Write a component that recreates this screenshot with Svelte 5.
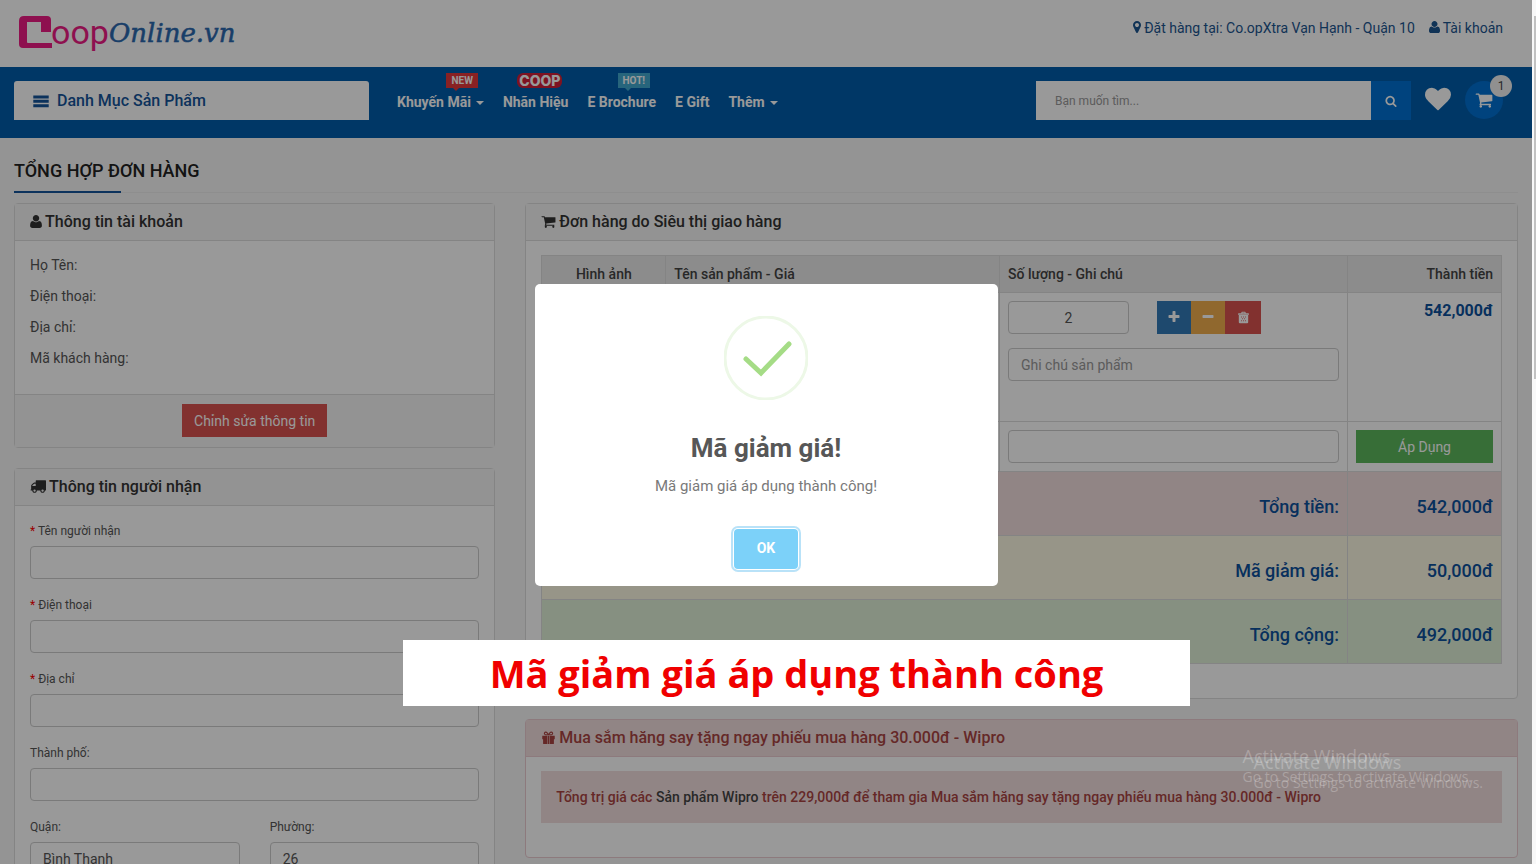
<script>
  const icons = {
    marker: "M1152 640q0-106-75-181t-181-75-181 75-75 181 75 181 181 75 181-75 75-181zm256 0q0 109-33 179l-364 774q-16 33-47.5 52t-67.5 19-67.5-19-46.5-52l-365-774q-33-70-33-179 0-212 150-362t362-150 362 150 150 362z",
    user: "M1600 1405q0 120-73 189.5t-194 69.5h-874q-121 0-194-69.5t-73-189.5q0-53 3.5-103.5t14-109 26.5-108.5 43-97.5 62-81 85.5-53.5 111.5-20q9 0 42 21.5t74.5 48 108 48 133.5 21.5 133.5-21.5 108-48 74.5-48 42-21.5q61 0 111.5 20t85.5 53.5 62 81 43 97.5 26.5 108.5 14 109 3.5 103.5zm-320-893q0 159-112.5 271.5t-271.5 112.5-271.5-112.5-112.5-271.5 112.5-271.5 271.5-112.5 271.5 112.5 112.5 271.5z",
    bars: "M128 340h1536v300H128zM128 780h1536v300H128zM128 1220h1536v300H128z",
    search: "M1216 832q0-185-131.5-316.5t-316.5-131.5-316.5 131.5-131.5 316.5 131.5 316.5 316.5 131.5 316.5-131.5 131.5-316.5zm512 832q0 52-38 90t-90 38q-54 0-90-38l-343-342q-179 124-399 124-143 0-273.5-55.5t-225-150-150-225-55.5-273.5 55.5-273.5 150-225 225-150 273.5-55.5 273.5 55.5 225 150 150 225 55.5 273.5q0 220-124 399l343 343q37 37 37 90z",
    heart: "M896 1664q-26 0-44-18l-624-602q-10-8-27.5-26t-55.5-65.5-68-97.5-53.5-121-23.5-138q0-220 127-344t351-124q62 0 126.5 21.5t120 58 95.5 68.5 76 68q36-36 76-68t95.5-68.5 120-58 126.5-21.5q224 0 351 124t127 344q0 221-229 450l-623 600q-18 18-44 18z",
    cart: "M704 1536q0 52-38 90t-90 38-90-38-38-90 38-90 90-38 90 38 38 90zm896 0q0 52-38 90t-90 38-90-38-38-90 38-90 90-38 90 38 38 90zm128-1088v512q0 24-16.5 42.5t-40.5 21.5l-1044 122q13 60 13 70 0 16-24 64h920q26 0 45 19t19 45-19 45-45 19h-1024q-26 0-45-19t-19-45q0-11 8-31.5t16-36 21.5-40 15.5-29.5l-177-823h-204q-26 0-45-19t-19-45 19-45 45-19h256q16 0 28.5 6.5t19.5 15.5 13 24.5 8 26 5.5 29.5 4.5 26h1201q26 0 45 19t19 45z",
    truck: "M640 1408q0-52-38-90t-90-38-90 38-38 90 38 90 90 38 90-38 38-90zm-384-512h384v-256h-158q-13 0-22 9l-195 195q-9 9-9 22v30zm1280 512q0-52-38-90t-90-38-90 38-38 90 38 90 90 38 90-38 38-90zm256-1088v1024q0 15-4 26.5t-13.5 18.5-16.5 11.5-23.5 6-22.5 2-25.5 0-22.5-.5q0 106-75 181t-181 75-181-75-75-181h-384q0 106-75 181t-181 75-181-75-75-181h-64q-3 0-22.5.5t-25.5 0-22.5-2-23.5-6-16.5-11.5-13.5-18.5-4-26.5q0-26 19-45t45-19v-320q0-8-.5-35t0-38 2.5-34.5 6.5-37 14-30.5 22.5-30l198-198q19-19 50.5-32t58.5-13h160v-192q0-26 19-45t45-19h1024q26 0 45 19t19 45z",
    gift: "M750 700H150v400h100v500q0 64 64 64h436zM1042 700h600v400h-100v500q0 64-64 64h-436zM810 700h172v964H810zM896 640Q780 640 560 640A232 232 0 1 1 760 270L896 440 1032 270A232 232 0 1 1 1232 640zM560 340a90 90 0 0 0 0 180h220L650 370q-40-30-90-30zM1232 340q-50 0-90 30L1012 520h220a90 90 0 0 0 0-180z",
    plus: "M1600 736v192q0 40-28 68t-68 28h-416v416q0 40-28 68t-68 28h-192q-40 0-68-28t-28-68v-416h-416q-40 0-68-28t-28-68v-192q0-40 28-68t68-28h416v-416q0-40 28-68t68-28h192q40 0 68 28t28 68v416h416q40 0 68 28t28 68z",
    minus: "M1600 736v192q0 40-28 68t-68 28h-1216q-40 0-68-28t-28-68v-192q0-40 28-68t68-28h1216q40 0 68 28t28 68z",
    trash: "M600 300V200q0-100 100-100h392q100 0 100 100v100h360q100 0 100 100v100H140V400q0-100 100-100zM740 300h312v-70H740zM250 560h1292v980q0 140-140 140H390q-140 0-140-140zM560 760v140h110V760zM841 760v140h110V760zM1122 760v140h110V760zM700 1010v140h110v-140zM981 1010v140h110v-140zM560 1260v140h110v-140zM841 1260v140h110v-140zM1122 1260v140h110v-140z",
  };

  // narrow glyphs drop the empty space at their sides
  const boxes = {
    marker: { x: 384, width: 1024 },
    user: { x: 192, width: 1408 },
  };

  const menu = [
    { name: "Khuyến Mãi", tag: "NEW", type: "new", caret: true },
    { name: "Nhãn Hiệu", tag: "COOP", type: "coop" },
    { name: "E Brochure", tag: "HOT!", type: "hot" },
    { name: "E Gift" },
    { name: "Thêm", caret: true },
  ];

  const account = ["Họ Tên:", "Điện thoại:", "Địa chỉ:", "Mã khách hàng:"];

  const fields = [
    { id: "name", label: "Tên người nhận", required: true },
    { id: "phone", label: "Điện thoại", required: true },
    { id: "address", label: "Địa chỉ", required: true },
    { id: "city", label: "Thành phố:" },
  ];

  const totals = [
    { label: "Tổng tiền:", value: "542,000đ", type: "danger" },
    { label: "Mã giảm giá:", value: "50,000đ", type: "warning" },
    { label: "Tổng cộng:", value: "492,000đ", type: "success" },
  ];

  let quantity = $state(2);
  let isShow = $state(true);
</script>

{#snippet icon(name, size)}
  {@const box = boxes[name] ?? { x: 0, width: 1792 }}
  <svg
    class="icon"
    width={Math.round((size * box.width) / 1792)}
    height={size}
    viewBox="{box.x} 0 {box.width} 1792"
    aria-hidden="true"
  >
    <path fill-rule="evenodd" d={icons[name]} />
  </svg>
{/snippet}

<div class="window">
  <div class="page">
    <header class="top">
      <a class="logo" href="/" aria-label="Coop Online">
        <svg width="224" height="48" viewBox="0 0 224 48">
          <path
            fill="#ed1c84"
            fill-rule="evenodd"
            d="M6 4H29Q33 4 33 8V20H23V10H9V30Q9 31 10 31H34V36H5Q1 36 1 32V9Q1 4 6 4Z"
          />
          <text class="oop" x="33" y="32">oop</text>
          <text class="online" x="91" y="30">Online.vn</text>
        </svg>
      </a>
      <div class="links">
        <a href="#store">{@render icon("marker", 14)}Đặt hàng tại: Co.opXtra Vạn Hạnh - Quận 10</a>
        <a href="#account">{@render icon("user", 14)}Tài khoản</a>
      </div>
    </header>

    <nav class="bar">
      <button class="category">{@render icon("bars", 18)} Danh Mục Sản Phẩm</button>
      <ul class="menu">
        {#each menu as item}
          <li>
            {#if item.tag}<span class="tag {item.type}">{item.tag}</span>{/if}
            <a href="#menu">{item.name}{#if item.caret}<i class="caret"></i>{/if}</a>
          </li>
        {/each}
      </ul>
      <form class="search">
        <input type="text" placeholder="Bạn muốn tìm..." aria-label="Tìm kiếm" />
        <button type="button" aria-label="Tìm">{@render icon("search", 12)}</button>
      </form>
      <a class="heart" href="#wishlist" aria-label="Yêu thích">{@render icon("heart", 26)}</a>
      <a class="cart" href="#cart" aria-label="Giỏ hàng">
        {@render icon("cart", 18)}
        <span class="count">1</span>
      </a>
    </nav>

    <main>
      <h1>TỔNG HỢP ĐƠN HÀNG</h1>
      <div class="row">
        <div class="left">
          <section class="panel">
            <h2>{@render icon("user", 15)}Thông tin tài khoản</h2>
            <div class="body account">
              {#each account as line}
                <p>{line}</p>
              {/each}
            </div>
            <div class="footer">
              <button class="btn red">Chỉnh sửa thông tin</button>
            </div>
          </section>

          <section class="panel">
            <h2>{@render icon("truck", 16)}Thông tin người nhận</h2>
            <div class="body receiver">
              {#each fields as field}
                <div class="group">
                  <label for={field.id}>{#if field.required}<b>*</b>{/if} {field.label}</label>
                  <input class="control" id={field.id} type="text" />
                </div>
              {/each}
              <div class="pair">
                <div class="group">
                  <label for="district">Quận:</label>
                  <input class="control" id="district" type="text" value="Bình Thạnh" />
                </div>
                <div class="group">
                  <label for="ward">Phường:</label>
                  <input class="control" id="ward" type="text" value="26" />
                </div>
              </div>
            </div>
          </section>
        </div>

        <div class="right">
          <section class="panel">
            <h2>{@render icon("cart", 15)}Đơn hàng do Siêu thị giao hàng</h2>
            <div class="body order">
              <table>
                <thead>
                  <tr>
                    <th class="image">Hình ảnh</th>
                    <th>Tên sản phẩm - Giá</th>
                    <th class="note">Số lượng - Ghi chú</th>
                    <th class="money">Thành tiền</th>
                  </tr>
                </thead>
                <tbody>
                  <tr class="product">
                    <td></td>
                    <td></td>
                    <td>
                      <div class="quantity">
                        <input class="control" type="text" aria-label="Số lượng" bind:value={quantity} />
                        <div class="actions">
                          <button class="plus" aria-label="Thêm" onclick={() => quantity++}>{@render icon("plus", 14)}</button>
                          <button class="minus" aria-label="Bớt" onclick={() => quantity--}>{@render icon("minus", 14)}</button>
                          <button class="trash" aria-label="Xóa">{@render icon("trash", 13)}</button>
                        </div>
                      </div>
                      <input class="control" type="text" placeholder="Ghi chú sản phẩm" aria-label="Ghi chú" />
                    </td>
                    <td class="price">542,000đ</td>
                  </tr>
                  <tr>
                    <td colspan="2"></td>
                    <td><input class="control" type="text" aria-label="Mã giảm giá" /></td>
                    <td><button class="btn green">Áp Dụng</button></td>
                  </tr>
                  {#each totals as total}
                    <tr class="total {total.type}">
                      <td colspan="3">{total.label}</td>
                      <td>{total.value}</td>
                    </tr>
                  {/each}
                </tbody>
              </table>
            </div>
          </section>

          <section class="panel promo">
            <h2>{@render icon("gift", 15)}Mua sắm hăng say tặng ngay phiếu mua hàng 30.000đ - Wipro</h2>
            <div class="body">
              <p class="alert">
                Tổng trị giá các <a href="#wipro">Sản phẩm Wipro</a> trên 229,000đ để tham gia Mua sắm hăng say tặng ngay phiếu mua hàng 30.000đ - Wipro
              </p>
            </div>
          </section>
        </div>
      </div>
    </main>

    {#if isShow}
      <div class="mask">
        <div class="dialog" role="dialog" aria-labelledby="dialog-title">
          <svg width="84" height="84" viewBox="0 0 84 84" fill="none" aria-hidden="true">
            <circle cx="42" cy="42" r="41" stroke="#edf8e7" stroke-width="3" />
            <path d="M22 43l15 14 28-29" stroke="#a5dc86" stroke-width="5" stroke-linecap="round" />
          </svg>
          <h2 id="dialog-title">Mã giảm giá!</h2>
          <p>Mã giảm giá áp dụng thành công!</p>
          <button onclick={() => (isShow = false)}>OK</button>
        </div>
      </div>
    {/if}

    <div class="watermark">
      <strong>Activate Windows</strong>
      <span>Go to Settings to activate Windows.</span>
    </div>
    <div class="watermark second" aria-hidden="true">
      <strong>Activate Windows</strong>
      <span>Go to Settings to activate Windows.</span>
    </div>
    <div class="caption">Mã giảm giá áp dụng thành công</div>
  </div>
  <div class="scrollbar"><div class="thumb"></div></div>
</div>

<style>
  :global(body) {
    margin: 0;
    overflow: hidden;
  }
  .window,
  .window * {
    box-sizing: border-box;
  }
  .window {
    display: flex;
    height: 100vh;
    overflow: hidden;
    font-family: Roboto, "Liberation Sans", sans-serif;
    font-size: 14px;
    line-height: 20px;
    color: #555;
  }
  .page {
    position: relative;
    flex: 1;
    height: 100%;
    overflow: hidden;
    background: #f7f7f7;
  }
  .scrollbar {
    width: 4px;
    padding: 16px 0 0 2px;
    background: #f8f8f8;
  }
  .thumb {
    height: 42vh;
    background: #c1c1c1;
  }
  h1,
  h2,
  p,
  ul {
    margin: 0;
    padding: 0;
    font-weight: 500;
  }
  a {
    color: inherit;
    text-decoration: none;
  }
  button,
  input {
    font-family: inherit;
    font-size: 14px;
    color: inherit;
  }
  button {
    padding: 0;
    border: 0;
    cursor: pointer;
  }
  .icon {
    fill: currentColor;
    vertical-align: -1px;
  }

  /* header */
  .top {
    display: flex;
    justify-content: space-between;
    height: 67px;
    padding: 12px 29px 0 18px;
    background: #fff;
  }
  .oop {
    fill: #ed1c84;
    font-family: Roboto, sans-serif;
    font-size: 34px;
  }
  .online {
    fill: #2a68ae;
    stroke: #2a68ae;
    stroke-width: 0.5px;
    font-family: "DejaVu Serif", serif;
    font-size: 26px;
    font-style: italic;
  }
  .links {
    display: flex;
    gap: 14px;
    padding-top: 6px;
    color: #1c558f;
  }
  .links .icon,
  .panel h2 .icon {
    margin-right: 3px;
  }
  .bar {
    display: flex;
    align-items: flex-start;
    height: 71px;
    padding: 14px 29px 0 14px;
    background: #005dab;
    color: #fff;
  }
  .category {
    flex: 0 0 355px;
    height: 39px;
    padding-left: 18px;
    border-radius: 3px 3px 0 0;
    background: #fff;
    color: #15549a;
    font-size: 16px;
    font-weight: 500;
    text-align: left;
  }
  .category .icon {
    margin-right: 3px;
    vertical-align: -4px;
  }
  .menu {
    display: flex;
    flex: 1;
    gap: 19px;
    padding: 11px 0 0 28px;
    list-style: none;
    font-weight: 700;
  }
  .menu li {
    position: relative;
  }
  .caret {
    display: inline-block;
    margin-left: 5px;
    border: 4px solid transparent;
    border-top-color: currentColor;
    border-bottom: 0;
    vertical-align: 2px;
  }
  .tag {
    position: absolute;
    top: -19px;
    right: 6px;
    padding: 0 5px;
    font-size: 10px;
    font-weight: 700;
    line-height: 15px;
  }
  .tag::after {
    content: "";
    position: absolute;
    left: 7px;
    top: 15px;
    border: 3px solid transparent;
    border-top-color: inherit;
    border-bottom: 0;
  }
  .new {
    background: #e5373b;
    border-color: #e5373b;
  }
  .hot {
    background: #42a8cf;
    border-color: #42a8cf;
  }
  .coop {
    padding: 0 2px;
    border-radius: 6px;
    background: #d21f38;
    font-family: Inter, sans-serif;
    font-size: 14px;
    font-weight: 800;
  }
  .coop::after {
    display: none;
  }
  .search {
    display: flex;
    flex: 0 0 375px;
    height: 39px;
  }
  .search input {
    flex: 1;
    min-width: 0;
    padding: 0 19px;
    border: 0;
    background: #fff;
    font-size: 12px;
  }
  .search button {
    width: 40px;
    background: #0070d2;
    color: #fff;
  }
  .heart {
    height: 26px;
    margin: 5px 14px 0;
  }
  .cart {
    position: relative;
    display: flex;
    align-items: center;
    justify-content: center;
    width: 38px;
    height: 38px;
    border-radius: 50%;
    background: #0070d2;
  }
  .count {
    position: absolute;
    top: -6px;
    right: -9px;
    width: 22px;
    border-radius: 50%;
    background: #f0f0f0;
    color: #444;
    font-size: 12px;
    line-height: 22px;
    text-align: center;
  }

  /* content */
  main {
    padding: 0 14px;
  }
  h1 {
    position: relative;
    margin-bottom: 10px;
    padding: 21px 0 9px;
    border-bottom: 1px solid #ededed;
    color: #222;
    font-size: 18px;
    font-weight: 500;
    line-height: 24px;
  }
  h1::after {
    content: "";
    position: absolute;
    left: 0;
    bottom: -1px;
    width: 107px;
    height: 2px;
    background: #15549a;
  }
  .row {
    display: grid;
    grid-template-columns: repeat(12, 1fr);
    gap: 30px;
  }
  .left {
    grid-column: span 4;
  }
  .right {
    grid-column: span 8;
  }
  .panel {
    margin-bottom: 20px;
    border: 1px solid #ddd;
    border-radius: 4px;
    background: #fff;
  }
  .panel h2 {
    height: 37px;
    padding: 8px 15px;
    border-bottom: 1px solid #ddd;
    background: #f5f5f5;
    color: #333;
    font-size: 16px;
    line-height: 20px;
  }
  .panel h2 .icon {
    vertical-align: -2px;
  }
  .body {
    padding: 14px 15px;
  }
  .account {
    padding-bottom: 15px;
  }
  .account p {
    height: 31px;
    font-weight: 400;
  }
  .footer {
    padding: 9px 10px 10px;
    border-top: 1px solid #ddd;
    background: #f5f5f5;
    text-align: center;
  }
  .btn {
    display: inline-block;
    height: 33px;
    padding: 0 12px;
    color: #fff;
    vertical-align: top;
  }
  .red {
    background: #d9534f;
  }
  .green {
    width: 100%;
    background: #5cb85c;
  }
  .receiver label {
    display: block;
    height: 26px;
    font-size: 12px;
    line-height: 22px;
  }
  .receiver b {
    color: #f00;
    font-weight: 400;
  }
  .group {
    margin-bottom: 15px;
  }
  .pair {
    display: grid;
    grid-template-columns: 1fr 1fr;
    gap: 30px;
  }
  .control {
    display: block;
    width: 100%;
    height: 33px;
    padding: 0 12px;
    border: 1px solid #ccc;
    border-radius: 4px;
    background: #fff;
  }
  input::placeholder {
    color: #999;
    opacity: 1;
  }

  /* order table */
  .order {
    padding-bottom: 34px;
  }
  table {
    width: 100%;
    border-collapse: collapse;
    table-layout: fixed;
  }
  th,
  td {
    padding: 8px;
    border: 1px solid #ddd;
    vertical-align: top;
    text-align: left;
  }
  th {
    background: #e9e9e9;
    color: #444;
    font-weight: 500;
  }
  .image {
    width: 124px;
    text-align: center;
  }
  .note {
    width: 348px;
  }
  .money {
    width: 154px;
    text-align: right;
  }
  .product td {
    height: 129px;
  }
  .quantity {
    display: flex;
    gap: 28px;
    margin-bottom: 14px;
  }
  .quantity .control {
    width: 121px;
    text-align: center;
  }
  .actions {
    display: flex;
  }
  .actions button {
    width: 34px;
    height: 33px;
    color: #fff;
  }
  .plus {
    background: #337ab7;
  }
  .minus {
    background: #f0ad4e;
  }
  .actions .trash {
    width: 36px;
    background: #d9534f;
  }
  .price {
    color: #0d519c;
    font-size: 16px;
    font-weight: 700;
    text-align: right;
  }
  .total td {
    height: 64px;
    padding: 6px 8px 0;
    color: #0d519c;
    font-size: 18px;
    font-weight: 500;
    text-align: right;
    vertical-align: middle;
  }
  .danger td {
    background: #f2dede;
  }
  .warning td {
    background: #fcf8e3;
  }
  .success td {
    background: #dff0d8;
  }

  .promo {
    border-color: #ebccd1;
  }
  .promo h2 {
    border-color: #ebccd1;
    background: #f2dede;
    color: #a94442;
  }
  .promo .body {
    padding-bottom: 34px;
  }
  .alert {
    padding: 16px 15px;
    background: #f2dede;
    color: #a94442;
    font-weight: 500;
  }
  .alert a {
    color: #444;
  }

  /* popup */
  .mask {
    position: absolute;
    top: 0;
    left: 0;
    display: flex;
    align-items: center;
    justify-content: center;
    width: 100%;
    height: 100%;
    padding-top: 6px;
    background-color: rgba(0, 0, 0, 0.4);
  }
  .dialog {
    display: flex;
    flex-direction: column;
    align-items: center;
    width: 463px;
    padding: 32px 16px 17px;
    border-radius: 5px;
    background: #fff;
  }
  .dialog h2 {
    margin: 30px 0 8px;
    color: #575757;
    font-size: 26px;
    font-weight: 700;
    line-height: 36px;
  }
  .dialog p {
    color: #797979;
    font-size: 15px;
    font-weight: 400;
    line-height: 24px;
  }
  .dialog button {
    width: 64px;
    height: 40px;
    margin-top: 31px;
    padding-bottom: 3px;
    border-radius: 4px;
    background: #7cd1f9;
    box-shadow: 0 0 0 1px #fff, 0 0 0 3px #b9e2f8;
    color: #fff;
    font-weight: 700;
  }
  .watermark {
    position: absolute;
    right: 60px;
    bottom: 77px;
    display: flex;
    flex-direction: column;
    color: rgba(255, 255, 255, 0.25);
    font-family: "Open Sans", sans-serif;
    font-size: 14px;
    line-height: 20px;
  }
  .watermark strong {
    font-size: 18px;
    font-weight: 400;
    line-height: 22px;
  }
  .second {
    right: 49px;
    bottom: 71px;
  }
  .caption {
    position: absolute;
    left: 403px;
    bottom: 158px;
    width: 787px;
    background: #fff;
    color: #f00000;
    font-family: "Open Sans", sans-serif;
    font-size: 38px;
    font-weight: 700;
    line-height: 66px;
    text-align: center;
  }
</style>
